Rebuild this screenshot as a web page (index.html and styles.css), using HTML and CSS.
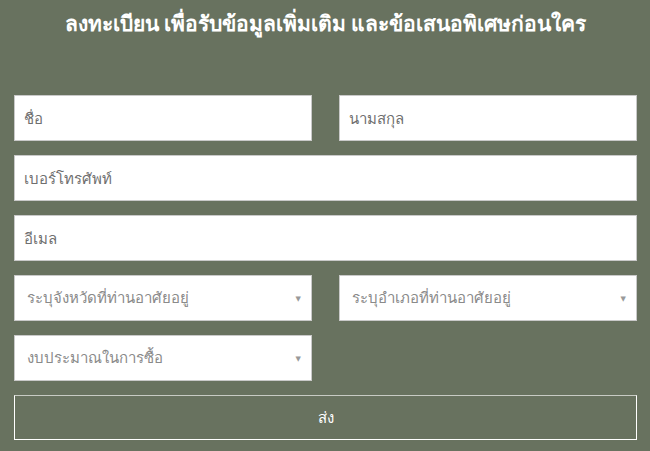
FILE: index.html
```html
<!DOCTYPE html>
<html>
<head>
	<meta charset="utf-8">
	<title>ลงทะเบียน</title>
	<link rel="stylesheet" href="styles.css">
</head>
<body>
	<div class="main">
		<h1 class="title">ลงทะเบียน เพื่อรับข้อมูลเพิ่มเติม และข้อเสนอพิเศษก่อนใคร</h1>
		<form class="form">
			<div class="row two">
				<input class="field" placeholder="ชื่อ">
				<input class="field" placeholder="นามสกุล">
			</div>
			<div class="row">
				<input class="field" placeholder="เบอร์โทรศัพท์">
			</div>
			<div class="row">
				<input class="field" placeholder="อีเมล">
			</div>
			<div class="row two">
				<div class="select">ระบุจังหวัดที่ท่านอาศัยอยู่<span class="arrow">▼</span></div>
				<div class="select">ระบุอำเภอที่ท่านอาศัยอยู่<span class="arrow">▼</span></div>
			</div>
			<div class="row two">
				<div class="select">งบประมาณในการซื้อ<span class="arrow">▼</span></div>
			</div>
			<button type="button" class="send">ส่ง</button>
		</form>
	</div>
</body>
</html>
```

FILE: styles.css
```css
body{
	margin: 0;
	padding: 0;
	background: #68725f;
	font-family: 'Noto Sans', 'DejaVu Sans', sans-serif;
}
.main{
	padding: 0 13px 0 14px;
}
.title{
	margin: 0;
	padding-top: 8px;
	height: 95px;
	box-sizing: border-box;
	text-align: center;
	color: #fff;
	font-size: 21px;
	font-weight: bold;
	line-height: 30px;
}
.form{
	display: flex;
	flex-direction: column;
	gap: 14px;
}
.row{
	display: grid;
	grid-template-columns: 1fr;
}
.row.two{
	grid-template-columns: 1fr 1fr;
	column-gap: 27px;
}
.field, .select{
	height: 46px;
	box-sizing: border-box;
	border: 1px solid #c9c9c9;
	background: #fff;
	padding: 0 9px;
	font-family: inherit;
	font-size: 15px;
	color: #333;
	outline: none;
	width: 100%;
}
.field::placeholder{
	color: #6f6f6f;
}
.select{
	display: flex;
	align-items: center;
	justify-content: space-between;
	padding: 0 10px 0 12px;
	color: #8a8a8a;
}
.arrow{
	font-size: 7px;
	color: #999;
}
.send{
	height: 45px;
	background: transparent;
	border: 1px solid #fff;
	border-top-color: #c8cbc4;
	color: #fff;
	font-family: inherit;
	font-size: 15px;
	cursor: pointer;
}
```
